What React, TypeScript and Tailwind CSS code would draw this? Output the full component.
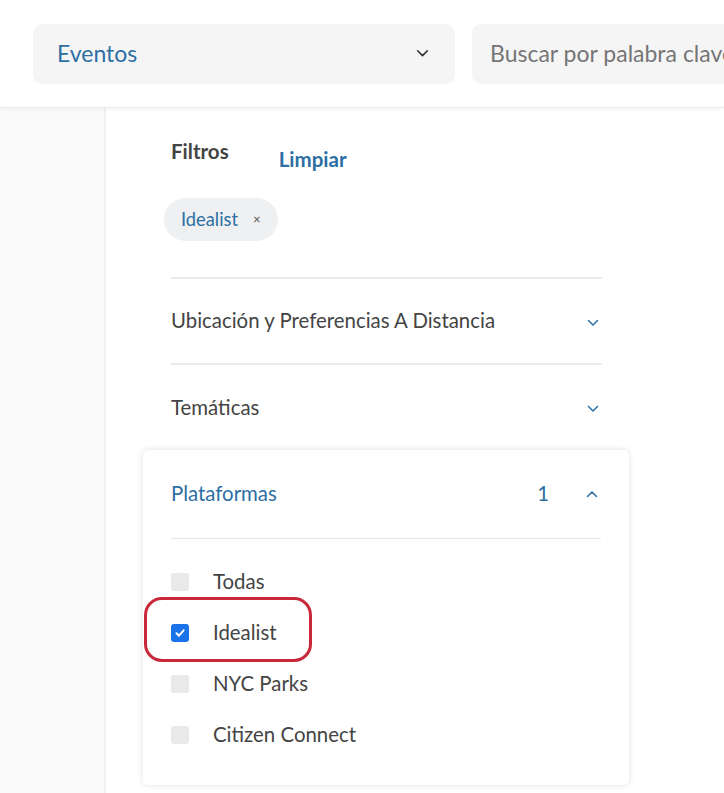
import { useState } from "react";

const platforms = ["Todas", "Idealist", "NYC Parks", "Citizen Connect"];

function Chevron({ up = false, className = "" }: { up?: boolean; className?: string }) {
  return (
    <svg viewBox="0 0 12 8" className={className} fill="none" stroke="currentColor" strokeWidth="1.5" strokeLinecap="round" strokeLinejoin="round">
      {up ? <path d="M1.5 6.5 6 2l4.5 4.5" /> : <path d="M1.5 1.5 6 6l4.5-4.5" />}
    </svg>
  );
}

function Check() {
  return (
    <svg viewBox="0 0 12 12" className="w-3 h-3" fill="none" stroke="white" strokeWidth="2" strokeLinecap="round" strokeLinejoin="round">
      <path d="M2.5 6.3 5 8.7l4.6-5.4" />
    </svg>
  );
}

export default function App() {
  const [selected, setSelected] = useState<string[]>(["Idealist"]);

  const toggle = (p: string) =>
    setSelected((s) => (s.includes(p) ? s.filter((x) => x !== p) : [...s, p]));

  return (
    <div className="w-[724px] h-[793px] overflow-hidden bg-white text-[#444] font-['Lato','Noto_Sans',sans-serif]">
      {/* Header */}
      <div className="h-[108px] bg-white flex items-center gap-[17px] pl-[33px] border-b border-[#ececec] shadow-[0_2px_4px_rgba(0,0,0,0.04)] relative z-10">
        <div className="w-[422px] h-[60px] shrink-0 rounded-[9px] bg-[#f6f5f6] flex items-center justify-between pl-6 pr-[26px]">
          <span className="text-[23px] text-[#2d6fa3]">Eventos</span>
          <Chevron className="w-[13px] h-[9px] text-[#333]" />
        </div>
        <div className="w-[300px] h-[60px] shrink-0 rounded-[9px] bg-[#f6f5f6] flex items-center pl-[18px] overflow-hidden">
          <span className="text-[23px] text-[#757575] whitespace-nowrap">Buscar por palabra clave</span>
        </div>
      </div>

      <div className="flex h-[685px]">
        <div className="w-[106px] bg-[#fafafa] border-r-2 border-[#f0f0f0]" />

        <div className="flex-1 pl-[37px] pt-[28px]">
          {/* Filters header */}
          <div className="pl-7 w-[459px]">
            <div className="flex items-start gap-[50px]">
              <span className="text-[20.5px] font-bold">Filtros</span>
              <button className="text-[20.5px] font-bold text-[#2d6fa3] mt-2">Limpiar</button>
            </div>
            <div className="mt-[23px] -ml-[7px]">
              <span className="inline-flex items-center h-[43px] px-[17px] rounded-full bg-[#eff0f1] text-[18.3px] text-[#2d6fa3]">
                Idealist
                <span className="ml-[15px] text-[13px] text-[#555]">×</span>
              </span>
            </div>

            <div className="mt-[36px] border-t-2 border-[#ececec]">
              <div className="h-[86px] flex items-center justify-between pr-[3px] border-b-2 border-[#ececec]">
                <span className="text-[20.4px]">Ubicación y Preferencias A Distancia</span>
                <Chevron className="w-[12px] h-[8px] text-[#2d6fa3] mt-1" />
              </div>
              <div className="h-[85px] flex items-center justify-between pr-[3px]">
                <span className="text-[20.4px]">Temáticas</span>
                <Chevron className="w-[12px] h-[8px] text-[#2d6fa3] mt-1" />
              </div>
            </div>
          </div>

          {/* Plataformas card */}
          <div className="relative w-[486px] h-[335px] rounded-[5px] bg-white shadow-[0_0_6px_rgba(0,0,0,0.12)] px-7">
            <div className="h-[89px] flex items-center justify-between border-b border-[#e6e6e6] pr-[3px]">
              <span className="text-[20.4px] text-[#2d6fa3]">Plataformas</span>
              <div className="flex items-center gap-[37px]">
                <span className="text-[20.4px] text-[#2d6fa3]">1</span>
                <Chevron up className="w-[12px] h-[8px] text-[#2d6fa3]" />
              </div>
            </div>
            <div className="pt-[34px] flex flex-col gap-[33px]">
              {platforms.map((p) => {
                const on = selected.includes(p);
                return (
                  <label key={p} className="flex items-center gap-6 h-[18px] cursor-pointer" onClick={() => toggle(p)}>
                    <span
                      className={
                        on
                          ? "w-[18px] h-[18px] rounded-[3px] bg-[#1a73e8] flex items-center justify-center"
                          : "w-[18px] h-[18px] rounded-[3px] bg-[#e9e9e9]"
                      }
                    >
                      {on && <Check />}
                    </span>
                    <span className="text-[20.4px]">{p}</span>
                  </label>
                );
              })}
            </div>

            {/* red annotation */}
            <div className="absolute left-[1px] top-[147px] w-[168px] h-[65px] rounded-[18px] border-[3px] border-[#c8283a] pointer-events-none" />
          </div>
        </div>
      </div>
    </div>
  );
}
